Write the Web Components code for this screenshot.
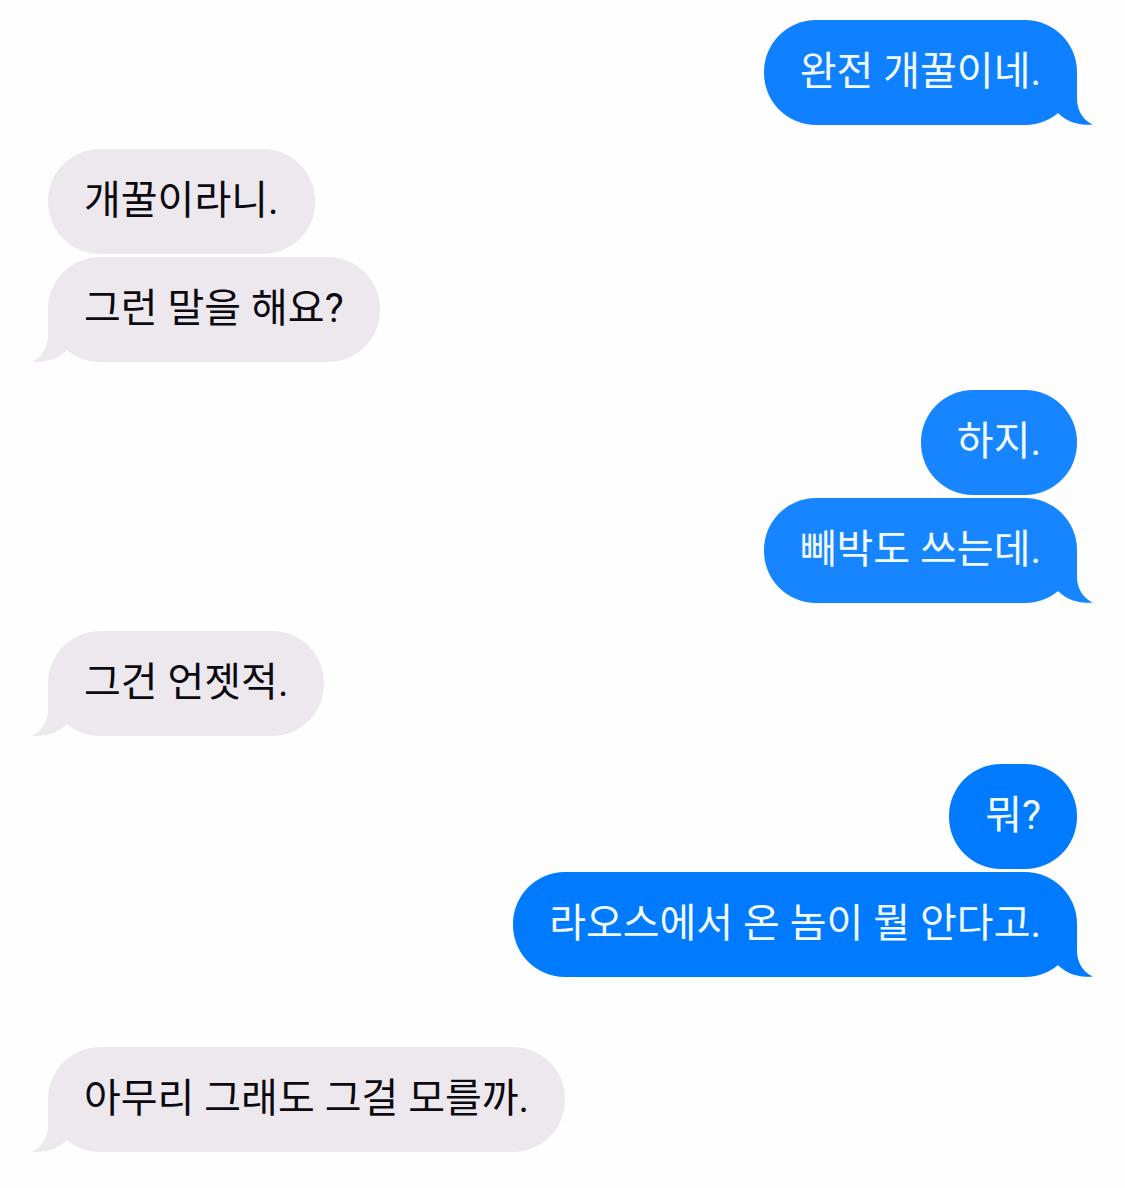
<!DOCTYPE html>
<html lang="ko">
<head>
<meta charset="utf-8">
<meta name="viewport" content="width=device-width, initial-scale=1">
<title>Messages</title>
<style>
  body {
    margin: 0;
    background: #fefefe;
    font-family: Roboto, "Noto Sans CJK KR", sans-serif;
  }
</style>
</head>
<body>

<message-thread>
  <message-group from="me" style="--bubble: #0f80ff">
    <message-bubble tail>완전 개꿀이네.</message-bubble>
  </message-group>
  <message-group from="them" pause="short">
    <message-bubble>개꿀이라니.</message-bubble>
    <message-bubble tail>그런 말을 해요?</message-bubble>
  </message-group>
  <message-group from="me" style="--bubble: #1685ff">
    <message-bubble>하지.</message-bubble>
    <message-bubble tail>빼박도 쓰는데.</message-bubble>
  </message-group>
  <message-group from="them">
    <message-bubble tail>그건 언젯적.</message-bubble>
  </message-group>
  <message-group from="me" style="--bubble: #007aff">
    <message-bubble>뭐?</message-bubble>
    <message-bubble tail>라오스에서 온 놈이 뭘 안다고.</message-bubble>
  </message-group>
  <message-group from="them" pause="long">
    <message-bubble tail>아무리 그래도 그걸 모를까.</message-bubble>
  </message-group>
</message-thread>

<script>
const threadTemplate = document.createElement('template');
threadTemplate.innerHTML = `
  <style>
    :host {
      display: flex;
      flex-direction: column;
      padding: 20px 48px 36px;
    }
  </style>
  <slot></slot>
`;

const groupTemplate = document.createElement('template');
groupTemplate.innerHTML = `
  <style>
    :host {
      display: flex;
      flex-direction: column;
      align-items: flex-start;
      gap: 3px;
      margin-top: 28px;
      --bubble: #ece8ed;
      --ink: #0c0a10;
      --flip: -1;
      --tail-left: -16px;
      --tail-right: auto;
    }

    :host(:first-child) {
      margin-top: 0;
    }

    :host([from="me"]) {
      align-items: flex-end;
      --ink: #f0fbff;
      --flip: 1;
      --tail-left: auto;
      --tail-right: -16px;
    }

    :host([pause="short"]) {
      margin-top: 24px;
    }

    :host([pause="long"]) {
      margin-top: 70px;
    }
  </style>
  <slot></slot>
`;

const bubbleTemplate = document.createElement('template');
bubbleTemplate.innerHTML = `
  <style>
    :host {
      display: block;
      position: relative;
      box-sizing: border-box;
      padding: 22px 36px 23px;
      border-radius: 52px;
      background: var(--bubble);
      color: var(--ink);
      font-size: 40px;
      line-height: 60px;
    }

    svg {
      display: none;
      position: absolute;
      bottom: 0;
      left: var(--tail-left);
      right: var(--tail-right);
      transform: scaleX(var(--flip));
      fill: var(--bubble);
    }

    :host([tail]) svg {
      display: block;
    }
  </style>
  <slot></slot>
  <svg width="53" height="53" viewBox="0 0 53 53" aria-hidden="true">
    <path d="M37 0V27C37 38 43 48 52 52.200C52.500 52.500 52.300 52.800 51.500 52.800C37 53 27 50 18 41L0 20V0Z"/>
  </svg>
`;

class MessageThread extends HTMLElement {
  constructor() {
    super();
    this.attachShadow({ mode: 'open' });
    this.shadowRoot.appendChild(threadTemplate.content.cloneNode(true));
  }
}

class MessageGroup extends HTMLElement {
  constructor() {
    super();
    this.attachShadow({ mode: 'open' });
    this.shadowRoot.appendChild(groupTemplate.content.cloneNode(true));
  }
}

class MessageBubble extends HTMLElement {
  constructor() {
    super();
    this.attachShadow({ mode: 'open' });
    this.shadowRoot.appendChild(bubbleTemplate.content.cloneNode(true));
  }
}

customElements.define('message-thread', MessageThread);
customElements.define('message-group', MessageGroup);
customElements.define('message-bubble', MessageBubble);
</script>
</body>
</html>
